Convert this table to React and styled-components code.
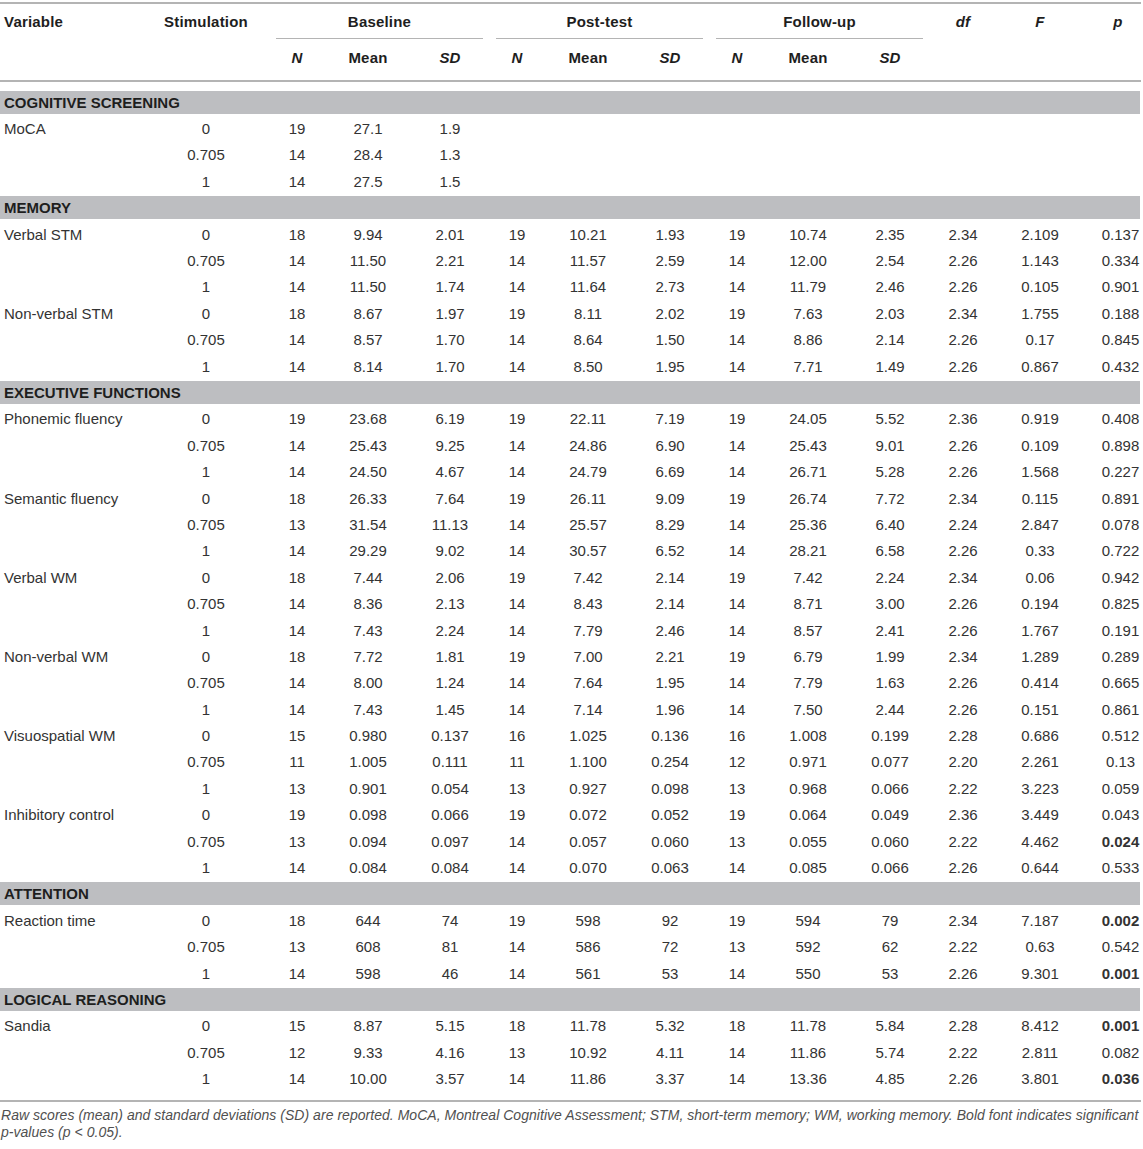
import React from "react";
import styled, { createGlobalStyle } from "styled-components";

const Global = createGlobalStyle`
  html, body { margin: 0; padding: 0; background: #fff; }
  body { font-family: "Liberation Sans", Arial, Helvetica, sans-serif; }
`;

const COLS = "143px 126px 56px 86px 78px 56px 86px 78px 56px 86px 78px 68px 86px 58px";

const Page = styled.div`
  width: 1141px;
  padding-top: 2px;
`;

const Table = styled.div`
  border-top: 2px solid #b4b4b4;
  border-bottom: 2px solid #b4b4b4;
  padding-bottom: 8px;
`;

const Head = styled.div`
  border-bottom: 2px solid #b4b4b4;
  margin-bottom: 7px;
`;

const HeadRow = styled.div`
  display: grid;
  grid-template-columns: ${COLS};
  height: ${(p) => p.$h}px;
  align-items: ${(p) => (p.$top ? "start" : "center")};
  padding-top: ${(p) => p.$pt || 0}px;
  box-sizing: border-box;
`;

const HeadCell = styled.div`
  font-size: 15px;
  font-weight: bold;
  font-style: ${(p) => (p.$i ? "italic" : "normal")};
  color: #1e1e1e;
  text-align: ${(p) => p.$align || "center"};
  padding-left: ${(p) => p.$pl || 0}px;
  line-height: 17px;
  letter-spacing: 0.2px;
`;

const GroupCell = styled.div`
  grid-column: span 3;
  align-self: stretch;
  display: flex;
  align-items: center;
  justify-content: center;
  margin: 0 6px 0 7px;
  border-bottom: 1px solid #b4b4b4;
  font-size: 15px;
  font-weight: bold;
  letter-spacing: 0.2px;
  color: #1e1e1e;
`;

const Row = styled.div`
  display: grid;
  grid-template-columns: ${COLS};
  height: 26.4px;
  align-items: center;
`;

const Cell = styled.div`
  font-size: 15px;
  color: #333;
  font-weight: ${(p) => (p.$b ? "bold" : "normal")};
  text-align: ${(p) => p.$align || "center"};
  padding-left: ${(p) => p.$pl || 0}px;
  white-space: nowrap;
  line-height: 17px;
`;

const SectionRow = styled.div`
  height: 26.4px;
  display: flex;
  align-items: center;
`;

const SectionBar = styled.div`
  width: 1140px;
  height: 23px;
  background: #bdbec1;
  display: flex;
  align-items: center;
  padding-left: 4px;
  box-sizing: border-box;
  font-size: 15px;
  font-weight: bold;
  color: #1e1e1e;
`;

const Note = styled.p`
  margin: 5px 0 0;
  padding-left: 1px;
  font-size: 14px;
  font-style: italic;
  line-height: 17px;
  letter-spacing: 0.035px;
  color: #505050;
  white-space: nowrap;
`;

const sections = [
  {
    title: "COGNITIVE SCREENING",
    vars: [
      {
        name: "MoCA",
        rows: [
          ["0", "19", "27.1", "1.9"],
          ["0.705", "14", "28.4", "1.3"],
          ["1", "14", "27.5", "1.5"],
        ],
      },
    ],
  },
  {
    title: "MEMORY",
    vars: [
      {
        name: "Verbal STM",
        rows: [
          ["0", "18", "9.94", "2.01", "19", "10.21", "1.93", "19", "10.74", "2.35", "2.34", "2.109", "0.137"],
          ["0.705", "14", "11.50", "2.21", "14", "11.57", "2.59", "14", "12.00", "2.54", "2.26", "1.143", "0.334"],
          ["1", "14", "11.50", "1.74", "14", "11.64", "2.73", "14", "11.79", "2.46", "2.26", "0.105", "0.901"],
        ],
      },
      {
        name: "Non-verbal STM",
        rows: [
          ["0", "18", "8.67", "1.97", "19", "8.11", "2.02", "19", "7.63", "2.03", "2.34", "1.755", "0.188"],
          ["0.705", "14", "8.57", "1.70", "14", "8.64", "1.50", "14", "8.86", "2.14", "2.26", "0.17", "0.845"],
          ["1", "14", "8.14", "1.70", "14", "8.50", "1.95", "14", "7.71", "1.49", "2.26", "0.867", "0.432"],
        ],
      },
    ],
  },
  {
    title: "EXECUTIVE FUNCTIONS",
    vars: [
      {
        name: "Phonemic fluency",
        rows: [
          ["0", "19", "23.68", "6.19", "19", "22.11", "7.19", "19", "24.05", "5.52", "2.36", "0.919", "0.408"],
          ["0.705", "14", "25.43", "9.25", "14", "24.86", "6.90", "14", "25.43", "9.01", "2.26", "0.109", "0.898"],
          ["1", "14", "24.50", "4.67", "14", "24.79", "6.69", "14", "26.71", "5.28", "2.26", "1.568", "0.227"],
        ],
      },
      {
        name: "Semantic fluency",
        rows: [
          ["0", "18", "26.33", "7.64", "19", "26.11", "9.09", "19", "26.74", "7.72", "2.34", "0.115", "0.891"],
          ["0.705", "13", "31.54", "11.13", "14", "25.57", "8.29", "14", "25.36", "6.40", "2.24", "2.847", "0.078"],
          ["1", "14", "29.29", "9.02", "14", "30.57", "6.52", "14", "28.21", "6.58", "2.26", "0.33", "0.722"],
        ],
      },
      {
        name: "Verbal WM",
        rows: [
          ["0", "18", "7.44", "2.06", "19", "7.42", "2.14", "19", "7.42", "2.24", "2.34", "0.06", "0.942"],
          ["0.705", "14", "8.36", "2.13", "14", "8.43", "2.14", "14", "8.71", "3.00", "2.26", "0.194", "0.825"],
          ["1", "14", "7.43", "2.24", "14", "7.79", "2.46", "14", "8.57", "2.41", "2.26", "1.767", "0.191"],
        ],
      },
      {
        name: "Non-verbal WM",
        rows: [
          ["0", "18", "7.72", "1.81", "19", "7.00", "2.21", "19", "6.79", "1.99", "2.34", "1.289", "0.289"],
          ["0.705", "14", "8.00", "1.24", "14", "7.64", "1.95", "14", "7.79", "1.63", "2.26", "0.414", "0.665"],
          ["1", "14", "7.43", "1.45", "14", "7.14", "1.96", "14", "7.50", "2.44", "2.26", "0.151", "0.861"],
        ],
      },
      {
        name: "Visuospatial WM",
        rows: [
          ["0", "15", "0.980", "0.137", "16", "1.025", "0.136", "16", "1.008", "0.199", "2.28", "0.686", "0.512"],
          ["0.705", "11", "1.005", "0.111", "11", "1.100", "0.254", "12", "0.971", "0.077", "2.20", "2.261", "0.13"],
          ["1", "13", "0.901", "0.054", "13", "0.927", "0.098", "13", "0.968", "0.066", "2.22", "3.223", "0.059"],
        ],
      },
      {
        name: "Inhibitory control",
        rows: [
          ["0", "19", "0.098", "0.066", "19", "0.072", "0.052", "19", "0.064", "0.049", "2.36", "3.449", "0.043"],
          ["0.705", "13", "0.094", "0.097", "14", "0.057", "0.060", "13", "0.055", "0.060", "2.22", "4.462", "*0.024"],
          ["1", "14", "0.084", "0.084", "14", "0.070", "0.063", "14", "0.085", "0.066", "2.26", "0.644", "0.533"],
        ],
      },
    ],
  },
  {
    title: "ATTENTION",
    vars: [
      {
        name: "Reaction time",
        rows: [
          ["0", "18", "644", "74", "19", "598", "92", "19", "594", "79", "2.34", "7.187", "*0.002"],
          ["0.705", "13", "608", "81", "14", "586", "72", "13", "592", "62", "2.22", "0.63", "0.542"],
          ["1", "14", "598", "46", "14", "561", "53", "14", "550", "53", "2.26", "9.301", "*0.001"],
        ],
      },
    ],
  },
  {
    title: "LOGICAL REASONING",
    vars: [
      {
        name: "Sandia",
        rows: [
          ["0", "15", "8.87", "5.15", "18", "11.78", "5.32", "18", "11.78", "5.84", "2.28", "8.412", "*0.001"],
          ["0.705", "12", "9.33", "4.16", "13", "10.92", "4.11", "14", "11.86", "5.74", "2.22", "2.811", "0.082"],
          ["1", "14", "10.00", "3.57", "14", "11.86", "3.37", "14", "13.36", "4.85", "2.26", "3.801", "*0.036"],
        ],
      },
    ],
  },
];

function DataRow({ name, values }) {
  const cells = [];
  for (let i = 0; i < 13; i++) {
    const raw = values[i] || "";
    const bold = raw.startsWith("*");
    const text = bold ? raw.slice(1) : raw;
    cells.push(
      <Cell key={i} $b={bold} $pl={i === 12 ? 17 : 0}>
        {text}
      </Cell>
    );
  }
  return (
    <Row>
      <Cell $align="left" $pl={4}>
        {name}
      </Cell>
      {cells}
    </Row>
  );
}

export default function App() {
  return (
    <Page>
      <Global />
      <Table>
        <Head>
          <HeadRow $h={35}>
            <HeadCell $align="left" $pl={4}>Variable</HeadCell>
            <HeadCell>Stimulation</HeadCell>
            <GroupCell>Baseline</GroupCell>
            <GroupCell>Post-test</GroupCell>
            <GroupCell>Follow-up</GroupCell>
            <HeadCell $i>df</HeadCell>
            <HeadCell $i>F</HeadCell>
            <HeadCell $i $pl={12}>p</HeadCell>
          </HeadRow>
          <HeadRow $h={41} $top $pt={10}>
            <HeadCell />
            <HeadCell />
            {[0, 1, 2].map((g) => (
              <React.Fragment key={g}>
                <HeadCell $i>N</HeadCell>
                <HeadCell>Mean</HeadCell>
                <HeadCell $i>SD</HeadCell>
              </React.Fragment>
            ))}
          </HeadRow>
        </Head>
        {sections.map((s) => (
          <React.Fragment key={s.title}>
            <SectionRow>
              <SectionBar>{s.title}</SectionBar>
            </SectionRow>
            {s.vars.map((v) =>
              v.rows.map((r, idx) => (
                <DataRow key={v.name + idx} name={idx === 0 ? v.name : ""} values={r} />
              ))
            )}
          </React.Fragment>
        ))}
      </Table>
      <Note>
        Raw scores (mean) and standard deviations (SD) are reported. MoCA, Montreal Cognitive Assessment; STM, short-term memory; WM, working memory. Bold font indicates significant
        <br />
        p-values (p &lt; 0.05).
      </Note>
    </Page>
  );
}
